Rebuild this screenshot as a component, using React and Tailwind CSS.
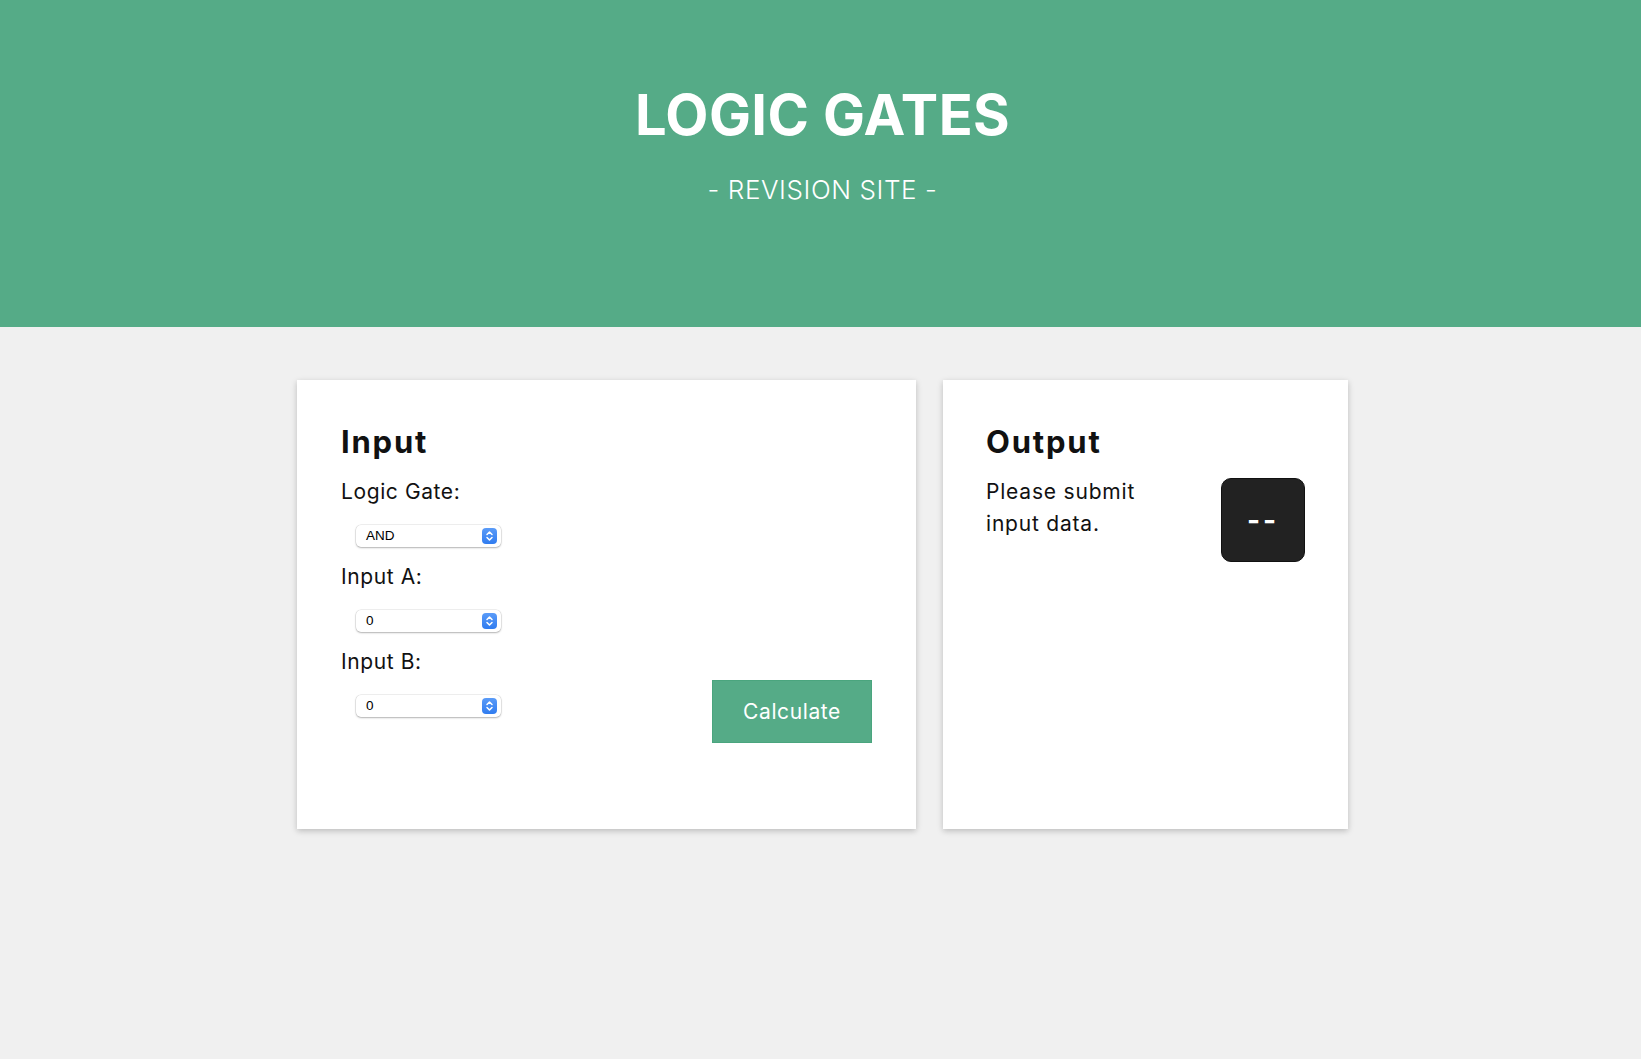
const GATE = ['AND']

function FakeSelect({ value }) {
  return (
    <div className="ml-[15px] flex h-[22px] w-[145px] items-center justify-between rounded-[5px] bg-white pl-[10px] pr-[4px] shadow-[0_0_0_0.5px_rgba(0,0,0,0.12),0_1px_2px_rgba(0,0,0,0.25)]">
      <span className="font-['Liberation_Sans',sans-serif] text-[13.5px] text-black">{value}</span>
      <span className="flex h-[16px] w-[15px] items-center justify-center rounded-[4px] bg-gradient-to-b from-[#5a9bf8] to-[#2f7cf0]">
        <svg width="9" height="12" viewBox="0 0 9 12" fill="none" stroke="white" strokeWidth="1.5" strokeLinecap="round" strokeLinejoin="round">
          <path d="M2 4.5 L4.5 2 L7 4.5" />
          <path d="M2 7.5 L4.5 10 L7 7.5" />
        </svg>
      </span>
    </div>
  )
}

function Field({ label, value }) {
  return (
    <div className="flex flex-col">
      <label className="text-[21px] leading-[32px] tracking-[0.6px] text-[#111]">{label}</label>
      <div className="mt-[17px]">
        <FakeSelect value={value} />
      </div>
    </div>
  )
}

export default function App() {
  return (
    <div className="min-h-screen bg-[#f0f0f0] font-['Inter',sans-serif]">
      <header className="flex h-[327px] flex-col items-center bg-[#55ab87] pl-[4px] pt-[82px] text-white">
        <h1 className="text-[56px] font-bold leading-[66px] tracking-[0.4px]">LOGIC GATES</h1>
        <p className="mt-[22px] text-[26px] font-light tracking-[0.6px]">- REVISION SITE -</p>
      </header>

      <main className="flex justify-center gap-[27px] pl-[4px] pt-[53px]">
        <section className="flex h-[449px] w-[619px] bg-white px-[44px] pt-[40px] shadow-[0_2px_6px_rgba(0,0,0,0.22)]">
          <div className="flex flex-1 flex-col">
            <h2 className="text-[31px] font-bold leading-[44px] tracking-[1.8px] text-[#111]">Input</h2>
            <div className="mt-[12px] flex flex-col gap-[14px]">
              <Field label="Logic Gate:" value={GATE[0]} />
              <Field label="Input A:" value="0" />
              <Field label="Input B:" value="0" />
            </div>
          </div>
          <div className="flex flex-col justify-start pt-[260px]">
            <button
              type="button"
              className="h-[63px] w-[160px] border border-[#4aa57e] bg-[#55ab87] text-[21px] tracking-[0.6px] text-white"
            >
              Calculate
            </button>
          </div>
        </section>

        <section className="flex h-[449px] w-[405px] items-start justify-between bg-white px-[43px] pt-[40px] shadow-[0_2px_6px_rgba(0,0,0,0.22)]">
          <div className="flex flex-col">
            <h2 className="text-[31px] font-bold leading-[44px] tracking-[1.8px] text-[#111]">Output</h2>
            <p className="mt-[12px] w-[170px] text-[21px] leading-[32px] tracking-[0.8px] text-[#111]">
              Please submit input data.
            </p>
          </div>
          <div className="mt-[58px] flex h-[84px] w-[84px] items-center justify-center rounded-[10px] border border-[#111] bg-[#222] text-[28px] font-bold tracking-[3px] text-white">
            --
          </div>
        </section>
      </main>
    </div>
  )
}
